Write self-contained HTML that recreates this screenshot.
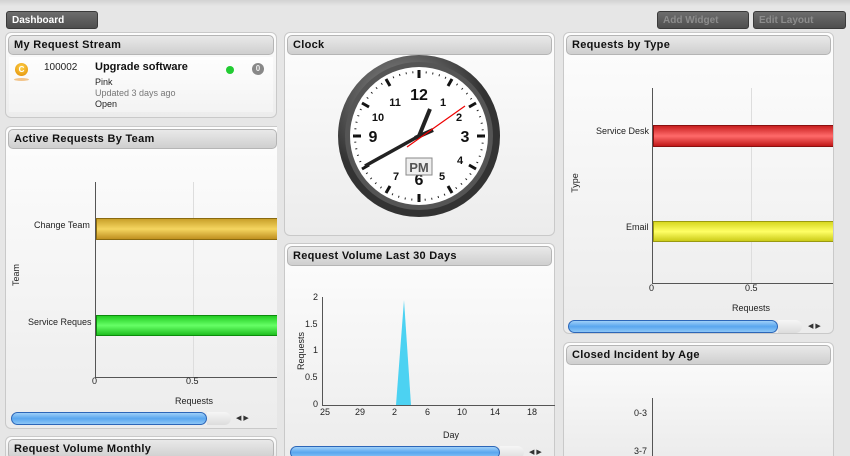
<!DOCTYPE html>
<html style="width:850px;height:456px;overflow:hidden"><head><style>
*{margin:0;padding:0;box-sizing:border-box}
body{width:850px;height:456px;overflow:hidden;background:#e6e6e6;font-family:"Liberation Sans",sans-serif;position:relative}
.a{position:absolute}
.top{left:0;top:0;width:850px;height:6px;background:linear-gradient(#d2d2d2,#e6e6e6)}
.btn{position:absolute;top:11px;height:18px;border-radius:3px;background:linear-gradient(#6d6d6d,#4e4e4e);border:1px solid #3a3a3a;font-size:10px;font-weight:bold;padding:3px 5px;color:#fff}
.btn.d{color:#8c8c8c}
.panel{position:absolute;border:1px solid #c9c9c9;border-radius:6px;background:linear-gradient(#fdfdfd,#ececec);overflow:hidden}
.hd{position:absolute;left:2px;right:2px;top:2px;height:20px;border-radius:5px;border:1px solid #b5b5b5;background:linear-gradient(#e9e9e9,#cfcfcf);font-size:11px;font-weight:bold;color:#111;padding:3px 5px;letter-spacing:.3px}
.t{position:absolute;font-size:9px;color:#222;white-space:nowrap}
.sb{position:absolute;height:13px;border-radius:7px;border:1px solid #2c66b8;background:linear-gradient(#9fd0f8,#5aa6ef 50%,#8cc6f6);}
.sbt{position:absolute;height:13px;background:linear-gradient(#f6f6f6,#dcdcdc);border-radius:0 7px 7px 0}
.arr{position:absolute;font-size:7px;color:#333}
</style></head><body>
<div class="a top"></div>
<div class="btn" style="left:6px;width:92px">Dashboard</div>
<div class="btn d" style="left:657px;width:92px">Add Widget</div>
<div class="btn d" style="left:753px;width:93px">Edit Layout</div>

<!-- col1 -->
<div class="panel" style="left:5px;top:32px;width:272px;height:86px">
<div class="hd">My Request Stream</div>
<div class="a" style="left:3px;top:24px;width:264px;height:55px;background:linear-gradient(#fefefe,#f3f3f3)"></div>
<div class="a" style="left:9px;top:30px;width:13px;height:13px;border-radius:50%;background:radial-gradient(circle at 50% 35%,#ffd24a,#e08a00);color:#fff;font-size:8px;font-weight:bold;text-align:center;line-height:13px">C</div>
<div class="a" style="left:8px;top:45px;width:15px;height:3px;background:#f2c48a;border-radius:50%"></div>
<div class="t" style="left:38px;top:29px;font-size:10px">100002</div>
<div class="t" style="left:89px;top:28px;font-size:11px;font-weight:bold;color:#111">Upgrade software</div>
<div class="t" style="left:89px;top:44px">Pink</div>
<div class="t" style="left:89px;top:55px;color:#777">Updated 3 days ago</div>
<div class="t" style="left:89px;top:66px">Open</div>
<div class="a" style="left:220px;top:33px;width:8px;height:8px;border-radius:50%;background:#2c3"></div>
<div class="a" style="left:246px;top:30px;width:12px;height:12px;border-radius:50%;background:#888;color:#eee;font-size:8px;text-align:center;line-height:12px;font-weight:bold">0</div>
</div>

<div class="panel" style="left:5px;top:126px;width:272px;height:303px;border-radius:6px 0 0 6px;border-right:none">
<div class="hd" style="right:0">Active Requests By Team</div>
</div>
<div class="a" style="left:95px;top:182px;width:1px;height:196px;background:#555"></div>
<div class="a" style="left:193px;top:182px;width:1px;height:196px;background:#ddd"></div>
<div class="a" style="left:95px;top:377px;width:182px;height:1px;background:#555"></div>
<div class="a" style="left:96px;top:218px;width:181px;height:22px;border:1px solid #8a6a10;border-right:none;background:linear-gradient(#c9a02a,#f5d560 50%,#c09020)"></div>
<div class="a" style="left:96px;top:315px;width:181px;height:21px;border:1px solid #0c8a0c;border-right:none;background:linear-gradient(#22cc22,#66ff66 50%,#1fbf1f)"></div>
<div class="t" style="left:34px;top:220px">Change Team</div>
<div class="t" style="left:28px;top:317px">Service Reques</div>
<div class="t" style="left:5px;top:270px;transform:rotate(-90deg)">Team</div>
<div class="t" style="left:92px;top:376px">0</div>
<div class="t" style="left:186px;top:376px">0.5</div>
<div class="t" style="left:175px;top:396px">Requests</div>
<div class="sb" style="left:11px;top:412px;width:196px"></div>
<div class="sbt" style="left:207px;top:412px;width:24px"></div>
<div class="arr" style="left:236px;top:414px">◀ ▶</div>

<div class="panel" style="left:5px;top:436px;width:272px;height:20px;border-bottom:none;border-radius:6px 6px 0 0"><div class="hd">Request Volume Monthly</div></div>

<!-- col2 -->
<div class="panel" style="left:284px;top:32px;width:271px;height:204px">
<div class="hd">Clock</div>
</div>
<svg class="a" style="left:334px;top:51px" width="170" height="170" viewBox="-85 -85 170 170">
<defs><radialGradient id="rg" cx="40%" cy="30%"><stop offset="0" stop-color="#999"/><stop offset="1" stop-color="#333"/></radialGradient></defs>
<circle r="81" fill="url(#rg)"/>
<circle r="74" fill="#555"/>
<circle r="69" fill="#fff"/>
<g stroke="#111" stroke-width="3">
<line x1="0" y1="-66" x2="0" y2="-58"/><line x1="0" y1="66" x2="0" y2="58"/><line x1="-66" y1="0" x2="-58" y2="0"/><line x1="66" y1="0" x2="58" y2="0"/>
<line x1="33" y1="-57" x2="29" y2="-50"/><line x1="57" y1="-33" x2="50" y2="-29"/><line x1="57" y1="33" x2="50" y2="29"/><line x1="33" y1="57" x2="29" y2="50"/>
<line x1="-33" y1="57" x2="-29" y2="50"/><line x1="-57" y1="33" x2="-50" y2="29"/><line x1="-57" y1="-33" x2="-50" y2="-29"/><line x1="-33" y1="-57" x2="-29" y2="-50"/>
</g>
<circle r="64" fill="none" stroke="#222" stroke-width="2" stroke-dasharray="1 5.7"/>
<g font-family="Liberation Sans" font-weight="bold" fill="#111" text-anchor="middle">
<text x="0" y="-36" font-size="16">12</text><text x="0" y="49" font-size="16">6</text><text x="-46" y="6" font-size="16">9</text><text x="46" y="6" font-size="16">3</text>
<text x="24" y="-30" font-size="11">1</text><text x="40" y="-15" font-size="11">2</text><text x="41" y="28" font-size="11">4</text><text x="23" y="44" font-size="11">5</text><text x="-23" y="44" font-size="11">7</text><text x="-41" y="-15" font-size="11">10</text><text x="-24" y="-30" font-size="11">11</text>
</g>
<rect x="-13" y="22" width="26" height="17" fill="#eee" stroke="#888"/>
<text x="0" y="36" text-anchor="middle" font-family="Liberation Sans" font-weight="bold" font-size="13" fill="#555">PM</text>
<line x1="0" y1="0" x2="11" y2="-27" stroke="#222" stroke-width="4"/>
<line x1="-4" y1="2" x2="14" y2="-6" stroke="#222" stroke-width="4"/>
<line x1="0" y1="0" x2="-54" y2="30" stroke="#222" stroke-width="3.5"/>
<line x1="-12" y1="11" x2="46" y2="-30" stroke="#e00" stroke-width="1.2"/>
</svg>

<div class="panel" style="left:284px;top:243px;width:271px;height:213px;border-bottom:none;border-radius:6px 6px 0 0">
<div class="hd">Request Volume Last 30 Days</div>
</div>
<div class="a" style="left:322px;top:297px;width:1px;height:108px;background:#555"></div>
<div class="a" style="left:322px;top:405px;width:233px;height:1px;background:#555"></div>
<svg class="a" style="left:396px;top:300px" width="16" height="106"><polygon points="0,105 8,0 15,105" fill="#4cd2f2"/></svg>
<div class="t" style="left:313px;top:292px">2</div>
<div class="t" style="left:305px;top:319px">1.5</div>
<div class="t" style="left:313px;top:345px">1</div>
<div class="t" style="left:305px;top:372px">0.5</div>
<div class="t" style="left:313px;top:399px">0</div>
<div class="t" style="left:282px;top:346px;transform:rotate(-90deg)">Requests</div>
<div class="t" style="left:320px;top:407px">25</div>
<div class="t" style="left:355px;top:407px">29</div>
<div class="t" style="left:392px;top:407px">2</div>
<div class="t" style="left:425px;top:407px">6</div>
<div class="t" style="left:457px;top:407px">10</div>
<div class="t" style="left:490px;top:407px">14</div>
<div class="t" style="left:527px;top:407px">18</div>
<div class="t" style="left:443px;top:430px">Day</div>
<div class="sb" style="left:290px;top:446px;width:210px"></div>
<div class="sbt" style="left:500px;top:446px;width:24px"></div>
<div class="arr" style="left:529px;top:448px">◀ ▶</div>

<!-- col3 -->
<div class="panel" style="left:563px;top:32px;width:271px;height:302px">
<div class="hd">Requests by Type</div>
</div>
<div class="a" style="left:652px;top:88px;width:1px;height:196px;background:#555"></div>
<div class="a" style="left:751px;top:88px;width:1px;height:196px;background:#ddd"></div>
<div class="a" style="left:652px;top:283px;width:181px;height:1px;background:#555"></div>
<div class="a" style="left:653px;top:125px;width:180px;height:22px;border:1px solid #8a1010;border-right:none;background:linear-gradient(#c82020,#ff6a6a 50%,#c01818)"></div>
<div class="a" style="left:653px;top:221px;width:180px;height:21px;border:1px solid #9a9a10;border-right:none;background:linear-gradient(#d8d820,#ffff66 50%,#cccc18)"></div>
<div class="t" style="left:596px;top:126px">Service Desk</div>
<div class="t" style="left:626px;top:222px">Email</div>
<div class="t" style="left:565px;top:178px;transform:rotate(-90deg)">Type</div>
<div class="t" style="left:649px;top:283px">0</div>
<div class="t" style="left:745px;top:283px">0.5</div>
<div class="t" style="left:732px;top:303px">Requests</div>
<div class="sb" style="left:568px;top:320px;width:210px"></div>
<div class="sbt" style="left:778px;top:320px;width:24px"></div>
<div class="arr" style="left:808px;top:322px">◀ ▶</div>

<div class="panel" style="left:563px;top:342px;width:271px;height:114px;border-bottom:none;border-radius:6px 6px 0 0">
<div class="hd">Closed Incident by Age</div>
</div>
<div class="a" style="left:652px;top:398px;width:1px;height:58px;background:#555"></div>
<div class="t" style="left:634px;top:408px">0-3</div>
<div class="t" style="left:634px;top:446px">3-7</div>
</body></html>
